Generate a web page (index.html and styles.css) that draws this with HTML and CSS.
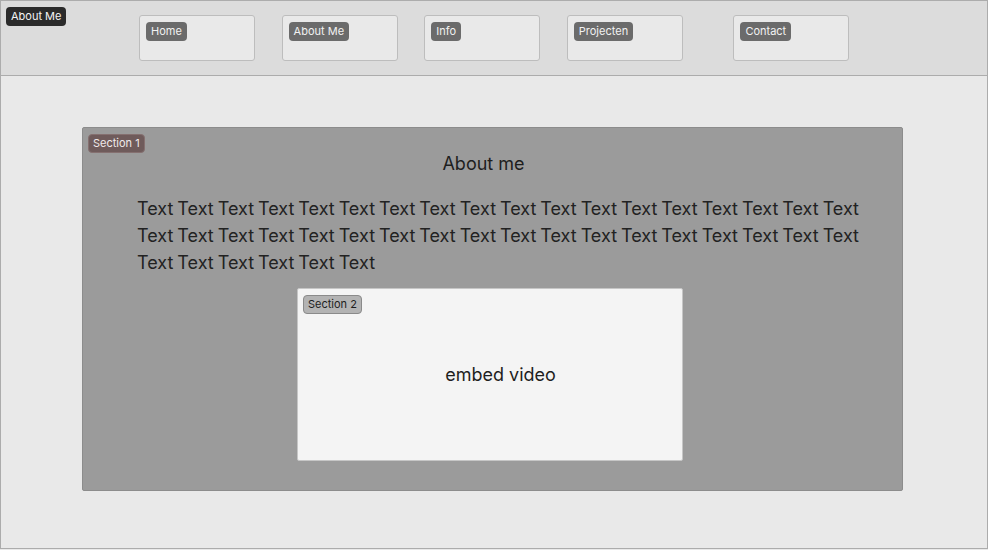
FILE: index.html
```html
<!DOCTYPE html>
<html>
<head>
<meta charset="utf-8">
<link rel="stylesheet" href="styles.css">
</head>
<body>
<div class="page">
  <header class="header">
    <span class="badge badge-dark logo">About Me</span>
    <nav class="nav">
      <div class="nav-box"><span class="badge badge-grey">Home</span></div>
      <div class="nav-box"><span class="badge badge-grey">About Me</span></div>
      <div class="nav-box"><span class="badge badge-grey">Info</span></div>
      <div class="nav-box"><span class="badge badge-grey">Projecten</span></div>
      <div class="nav-box nav-last"><span class="badge badge-grey">Contact</span></div>
    </nav>
  </header>
  <main class="main">
    <section class="section1">
      <span class="badge badge-brown corner">Section 1</span>
      <h1 class="title">About me</h1>
      <p class="text">Text Text Text Text Text Text Text Text Text Text Text Text Text Text Text Text Text Text Text Text Text Text Text Text Text Text Text Text Text Text Text Text Text Text Text Text Text Text Text Text Text Text</p>
      <div class="section2">
        <span class="badge badge-light corner">Section 2</span>
        <div class="video">embed video</div>
      </div>
    </section>
  </main>
</div>
</body>
</html>
```
FILE: styles.css
```css
* { box-sizing: border-box; }
body {
  margin: 0;
  font-family: Inter, "Noto Sans", sans-serif;
  background: #e9e9e9;
}
.page {
  width: 988px;
  height: 549px;
  border: 1px solid #acacac;
  background: #e9e9e9;
}
.header {
  position: relative;
  height: 75px;
  background: #dcdcdc;
  border-bottom: 1px solid #acacac;
  padding: 14px 0 0 138px;
}
.badge {
  display: block;
  font-size: 11px;
  line-height: 13px;
  padding: 3px 5px;
  border-radius: 4px;
  white-space: nowrap;
}
.badge-dark { background: #2b2b2b; color: #f4f4f4; }
.badge-grey { background: #6b6b6b; color: #f2f2f2; }
.badge-brown { background: #6f5b5b; color: #f0eaea; border: 1px solid #857070; padding: 2px 4px; }
.badge-light { background: #b3b3b3; color: #1e1e1e; border: 1px solid #8a8a8a; padding: 2px 4px; }
.logo {
  position: absolute;
  left: 5px;
  top: 6px;
}
.nav {
  display: flex;
  gap: 26.6px;
}
.nav-box {
  display: flex;
  align-items: flex-start;
  width: 116px;
  height: 46px;
  border: 1px solid #bdbdbd;
  border-radius: 3px;
  background: #e9e9e9;
  padding: 6px;
}
.nav-last { margin-left: 24px; }
.main {
  padding: 51px 0 0 81px;
}
.section1 {
  position: relative;
  width: 821px;
  height: 364px;
  background: #9b9b9b;
  border: 1px solid #8c8c8c;
  border-radius: 2px;
  padding-top: 25px;
}
.corner {
  position: absolute;
  left: 5px;
  top: 6px;
}
.title {
  margin: 0;
  text-align: center;
  font-weight: 400;
  font-size: 18px;
  line-height: 22px;
  color: #1e1e1e;
  padding-right: 18px;
}
.text {
  margin: 20px 0 0 54px;
  width: 735px;
  font-size: 18px;
  line-height: 27px;
  word-spacing: -1.1px;
  color: #222;
}
.section2 {
  position: relative;
  margin: 12px 0 0 214px;
  width: 386px;
  height: 173px;
  background: #f4f4f4;
  border: 1px solid #c6c6c6;
  border-radius: 2px;
  display: flex;
  align-items: center;
  justify-content: center;
  padding-left: 21px;
}
.video {
  font-size: 18px;
  color: #1e1e1e;
}
```
